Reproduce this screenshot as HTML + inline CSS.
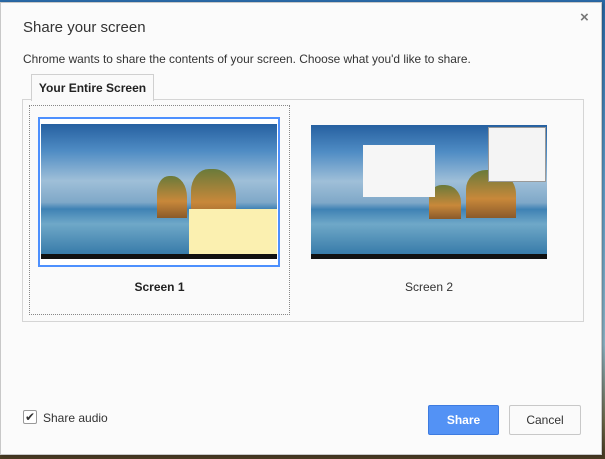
<!DOCTYPE html>
<html><head><style>
*{margin:0;padding:0;box-sizing:border-box}
body{width:605px;height:459px;overflow:hidden;position:relative;font-family:"Liberation Sans",sans-serif;background:linear-gradient(#2a6aa8 0%,#5f9cc8 40%,#8fb7c8 75%,#6f6a4a 92%,#4a3a22 100%)}
.dlg{position:absolute;left:0;top:2px;width:602px;height:453px;background:#fbfbfb;border:1px solid #c8c8c8;box-shadow:1px 1px 3px rgba(0,0,0,.3)}
.a{position:absolute}
.thumb{position:absolute;overflow:hidden;background:linear-gradient(180deg,#2660a0 0%,#4f8cc4 20%,#9fbfd8 42%,#7fa8c8 58%,#3f82b4 63%,#6fa8c8 74%,#2f74a4 100%)}
.tb{position:absolute;left:0;right:0;bottom:0;height:5px;background:#111}
.rock{position:absolute;background:linear-gradient(#6a7a3a,#c8883a 60%,#8a5a2a);border-radius:40% 50% 0 0}
</style></head><body>
<div class="dlg">
<div class="a" style="left:22px;top:16px;font-size:15px;color:#333">Share your screen</div>
<div class="a" style="left:579px;top:6px;font-size:15px;color:#777;font-weight:bold">×</div>
<div class="a" style="left:22px;top:49px;font-size:11.9px;color:#333">Chrome wants to share the contents of your screen. Choose what you'd like to share.</div>
<div class="a" style="left:21px;top:96px;width:562px;height:223px;border:1px solid #d5d5d5;background:#fafafa"></div>
<div class="a" style="left:30px;top:71px;width:123px;height:27px;border:1px solid #d0d0d0;border-bottom:none;background:#fafafa;font-size:12px;font-weight:bold;color:#222;text-align:center;line-height:27px">Your Entire Screen</div>
<div class="a" style="left:28px;top:102px;width:261px;height:210px;border:1px dotted #888"></div>
<div class="a" style="left:37px;top:114px;width:242px;height:150px;border:2px solid #4d90fe;background:#fff"></div>
<div class="thumb" style="left:40px;top:121px;width:236px;height:135px">
<div class="rock" style="left:116px;top:52px;width:30px;height:42px"></div>
<div class="rock" style="left:150px;top:45px;width:45px;height:55px"></div>
<div class="a" style="left:148px;top:85px;width:88px;height:45px;background:#fbf0b0"></div>
<div class="tb"></div>
</div>
<div class="a" style="left:0;top:277px;width:317px;text-align:center;font-size:12px;font-weight:bold;color:#222">Screen 1</div>
<div class="thumb" style="left:310px;top:122px;width:236px;height:134px">
<div class="rock" style="left:118px;top:60px;width:32px;height:34px"></div>
<div class="rock" style="left:155px;top:45px;width:50px;height:48px"></div>
<div class="a" style="left:52px;top:20px;width:72px;height:52px;background:#f6f6f6"></div>
<div class="a" style="left:177px;top:2px;width:58px;height:55px;background:#f4f4f4;border:1px solid #999"></div>
<div class="tb"></div>
</div>
<div class="a" style="left:280px;top:277px;width:296px;text-align:center;font-size:12px;color:#333">Screen 2</div>
<div class="a" style="left:22px;top:407px;width:14px;height:14px;border:1px solid #999;border-radius:2px;background:#fff;font-size:12px;line-height:12px;text-align:center;color:#333">✔</div>
<div class="a" style="left:42px;top:408px;font-size:12px;color:#333">Share audio</div>
<div class="a" style="left:427px;top:402px;width:71px;height:30px;background:#5392f5;border:1px solid #3d7be0;border-radius:2px;color:#fff;font-weight:bold;font-size:12px;text-align:center;line-height:28px">Share</div>
<div class="a" style="left:508px;top:402px;width:72px;height:30px;background:#fafafa;border:1px solid #c8c8c8;border-radius:2px;color:#333;font-size:12px;text-align:center;line-height:28px">Cancel</div>
</div>
</body></html>
